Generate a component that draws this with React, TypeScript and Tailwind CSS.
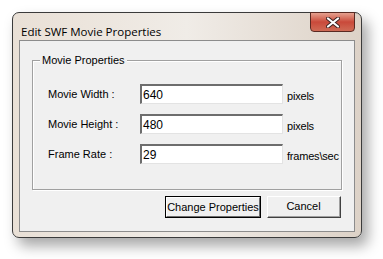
import React from 'react';

const ui = { fontFamily: '"Liberation Sans", Arial, sans-serif' };

function Field({ label, value, unit }: { label: string; value: string; unit: string }) {
  return (
    <div className="flex items-center h-[20px]">
      <div className="w-[92px] text-[11px] text-black pl-[15px] box-content whitespace-nowrap">{label}</div>
      <div className="w-[143px] h-[20px] bg-white border-t-2 border-l-2 border-t-[#6d6d6d] border-l-[#6d6d6d] border-b border-r border-b-[#e3e3e3] border-r-[#e3e3e3] flex items-center pl-[1px] text-[12px] text-black leading-none">
        {value}
      </div>
      <div className="ml-[4px] text-[11px] text-black mt-[4px] whitespace-nowrap tracking-[-0.2px]">{unit}</div>
    </div>
  );
}

export default function App() {
  return (
    <div className="w-[383px] h-[259px] bg-white pt-[12px] pl-[12px]" style={ui}>
      <div className="w-[350px] h-[226px] rounded-[7px] border border-[#3b3b3b] bg-gradient-to-r from-[#e9e0d6] via-[#f0ece7] to-[#ddd2c7] shadow-[6px_8px_14px_rgba(0,0,0,0.35)] flex flex-col px-[6px] pb-[5px]">
        <div className="h-[27px] flex items-start relative">
          <span className="mt-[10px] ml-[2px] text-[11.5px] text-black" style={{ fontFamily: '"Open Sans", "Noto Sans", sans-serif' }}>
            Edit SWF Movie Properties
          </span>
          <div className="absolute right-0 top-[-1px] w-[45px] h-[20px] rounded-b-[4px] border border-[#5a2a22] bg-gradient-to-b from-[#e4a08f] via-[#c9493a] to-[#cf6a55] flex items-center justify-center">
            <svg width="14" height="11" viewBox="0 0 14 11">
              <path d="M2 1.5 L12 9.5 M12 1.5 L2 9.5" stroke="#3b2220" strokeWidth="4" strokeLinecap="round" />
              <path d="M2 1.5 L12 9.5 M12 1.5 L2 9.5" stroke="#ffffff" strokeWidth="2.2" strokeLinecap="round" />
            </svg>
          </div>
        </div>
        <div className="flex-1 bg-[#f0f0f0] border border-[#8c8c8c] flex flex-col px-[12px] pt-[14px]">
          <div className="relative h-[130px] border border-[#a0a0a0] shadow-[inset_1px_1px_0_#ffffff,1px_1px_0_#ffffff] mt-[5px]">
            <span className="absolute left-[7px] top-[-8px] px-[2px] bg-[#f0f0f0] text-[11px] text-black leading-[14px]">
              Movie Properties
            </span>
            <div className="flex flex-col gap-[10px] pt-[23px]">
              <Field label="Movie Width :" value="640" unit="pixels" />
              <Field label="Movie Height :" value="480" unit="pixels" />
              <Field label="Frame Rate :" value="29" unit="frames\sec" />
            </div>
          </div>
          <div className="flex justify-end gap-[6px] mt-[6px] pr-[1px]">
            <button className="w-[96px] h-[22px] border border-black bg-[#f0f0f0] text-[11px] text-black p-0 whitespace-nowrap">
              <div className="w-full h-full border-t border-l border-t-white border-l-white border-b border-r border-b-[#6d6d6d] border-r-[#6d6d6d] flex items-center justify-center">
                Change Properties
              </div>
            </button>
            <button className="w-[74px] h-[22px] bg-[#f0f0f0] text-[11px] text-black p-0 border-t border-l border-t-white border-l-white border-b border-r border-b-[#404040] border-r-[#404040]">
              <div className="w-full h-full border-b border-r border-b-[#a0a0a0] border-r-[#a0a0a0] flex items-center justify-center">
                Cancel
              </div>
            </button>
          </div>
        </div>
      </div>
    </div>
  );
}
